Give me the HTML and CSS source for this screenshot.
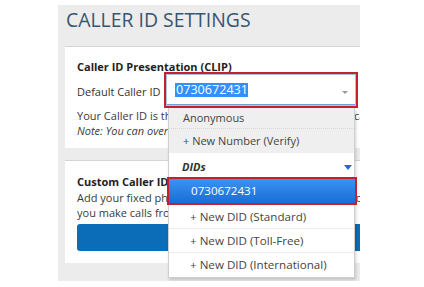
FILE: index.html
```html
<!DOCTYPE html>
<html lang="en">
<head>
<meta charset="utf-8">
<title>Caller ID Settings</title>
<link rel="stylesheet" href="styles.css">
</head>
<body>
<div class="panel">
  <h1 class="heading">CALLER ID SETTINGS</h1>
  <section class="card card-clip">
    <h2 class="card-title">Caller ID Presentation (CLIP)</h2>
    <div class="field-row">
      <span class="field-label">Default Caller ID</span>
      <div class="select-wrap">
        <div class="select-box">
          <span class="select-value">0730672431</span>
          <span class="select-arrow"></span>
        </div>
        <ul class="menu">
          <li class="menu-item menu-item-alt">Anonymous</li>
          <li class="menu-item menu-item-alt menu-item-last">+ New Number (Verify)</li>
          <li class="menu-group">DIDs <span class="group-arrow"></span></li>
          <li class="menu-item menu-item-sub menu-item-active">0730672431</li>
          <li class="menu-item menu-item-sub">+ New DID (Standard)</li>
          <li class="menu-item menu-item-sub">+ New DID (Toll-Free)</li>
          <li class="menu-item menu-item-sub menu-item-end">+ New DID (International)</li>
        </ul>
      </div>
    </div>
    <p class="line">Your Caller ID is the number shown to the people you call.</p>
    <p class="line line-note"><em>Note: You can override the Caller ID per extension.</em></p>
  </section>
  <section class="card card-custom">
    <h2 class="card-title">Custom Caller ID</h2>
    <p class="line">Add your fixed phone number or mobile number to show it when</p>
    <p class="line">you make calls from your account.</p>
    <button class="btn-primary" type="button">Add Custom Caller ID</button>
  </section>
</div>
</body>
</html>
```

FILE: styles.css
```css
* {
  box-sizing: border-box;
}

html, body {
  margin: 0;
  padding: 0;
  background: #ffffff;
}

body {
  font-family: "Open Sans", "Noto Sans", sans-serif;
  color: #333333;
  font-size: 11px;
}

.panel {
  margin: 5px 0 0 58px;
  width: 302px;
  height: 276px;
  background: #ececec;
  padding: 2px 0 0 7px;
  display: flex;
  flex-direction: column;
}

.heading {
  margin: 0 0 13px 1px;
  font-size: 19.4px;
  line-height: 26px;
  font-weight: 400;
  color: #37566f;
  letter-spacing: 0;
}

.card {
  background: #ffffff;
  border-top: 1px solid #d4d4d4;
  padding: 0 0 0 12px;
}

.card-clip {
  height: 102px;
  padding-top: 12px;
  position: relative;
  z-index: 2;
}

.card-custom {
  margin-top: 12px;
  height: 103px;
  padding-top: 13px;
  overflow: hidden;
}

.card-title {
  margin: 0;
  font-size: 11px;
  line-height: 15.5px;
  font-weight: 700;
  color: #222222;
  white-space: nowrap;
}

.field-row {
  display: flex;
  align-items: center;
  margin-top: -3px;
  height: 36px;
}

.field-label {
  white-space: nowrap;
  padding-top: 3px;
  width: 87px;
  flex: none;
}

.select-wrap {
  position: relative;
  flex: 1;
  margin-right: 2px;
  height: 36px;
}

.select-box {
  height: 36px;
  border: 2px solid #c6202f;
  background: #ffffff;
  display: flex;
  align-items: center;
  padding-left: 9px;
  position: relative;
  box-shadow: inset 0 0 0 1px #a9c6e6, inset 0 -2px 0 #6aa3dd;
}

.select-value {
  background: #3391ff;
  color: #ffffff;
  font-size: 12.6px;
  line-height: 14px;
  padding: 0 0 0 1px;
  margin-top: 1px;
}

.select-arrow {
  position: absolute;
  right: 8px;
  top: 17px;
  width: 0;
  height: 0;
  border-left: 3px solid transparent;
  border-right: 3px solid transparent;
  border-top: 3px solid #9a9a9a;
}

.menu {
  position: absolute;
  left: 4px;
  top: 100%;
  width: 187px;
  margin: 0;
  padding: 0;
  list-style: none;
  background: #ffffff;
  border: 1px solid #cfcfcf;
  border-top: none;
  box-shadow: 1px 2px 3px rgba(0, 0, 0, 0.18);
  z-index: 5;
}

.menu-item {
  height: 24px;
  line-height: 23px;
  padding-left: 14px;
  color: #444444;
  white-space: nowrap;
  border-bottom: 1px solid #ececec;
}

.menu-item-alt {
  background: #efefef;
  border-bottom: 1px dotted #d6d6d6;
}

.menu-item-alt:first-child {
  height: 21px;
  line-height: 19px;
}

.menu-item-last {
  border-bottom: none;
}

.menu-group {
  height: 24px;
  line-height: 28px;
  padding-left: 13px;
  font-weight: 700;
  font-style: italic;
  color: #333333;
  position: relative;
}

.group-arrow {
  position: absolute;
  right: 2px;
  top: 12px;
  width: 0;
  height: 0;
  border-left: 4px solid transparent;
  border-right: 4px solid transparent;
  border-top: 5px solid #1b6fd2;
}

.menu-item-sub {
  padding-left: 21px;
  height: 24px;
  line-height: 23px;
  font-size: 11.6px;
}

.menu-item-active {
  height: 28px;
  line-height: 24px;
  margin: 0 -3px 0 -2px;
  padding-left: 22px;
  border: 2px solid #c6202f;
  background: linear-gradient(#3b93f2, #1a6dd8);
  color: #ffffff;
  font-size: 11.6px;
}

.menu-item-end {
  border-bottom: none;
}

.line {
  margin: 0;
  line-height: 15px;
  white-space: nowrap;
  overflow: hidden;
  color: #3a3a3a;
}

.card-custom .line {
  line-height: 15.5px;
}

.line-note em {
  font-style: italic;
}

.btn-primary {
  display: block;
  margin-top: 3px;
  width: 300px;
  height: 27px;
  border: none;
  border-radius: 3px;
  background: #0b6cb7;
  color: #ffffff;
  font-family: inherit;
  font-size: 11px;
  text-align: left;
  padding-left: 120px;
}
```
